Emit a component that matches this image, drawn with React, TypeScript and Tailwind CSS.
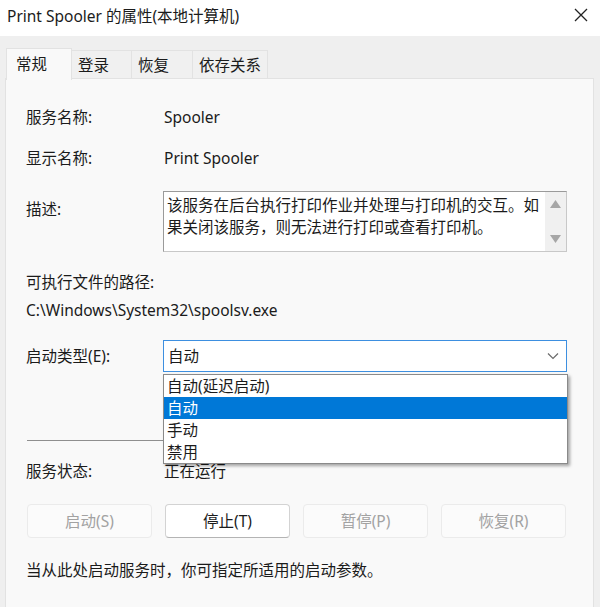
import React from "react";

const font = {
  fontFamily: '"Segoe UI", "Noto Sans", "Noto Sans CJK SC", sans-serif',
};

const tabs = [
  { label: "常规", w: "w-[66px]", active: true },
  { label: "登录", w: "w-[60px]" },
  { label: "恢复", w: "w-[61px]" },
  { label: "依存关系", w: "w-[75px]" },
];

const buttons = [
  { label: "启动(S)", enabled: false },
  { label: "停止(T)", enabled: true },
  { label: "暂停(P)", enabled: false },
  { label: "恢复(R)", enabled: false },
];

const options = ["自动(延迟启动)", "自动", "手动", "禁用"];

export default function App() {
  return (
    <div
      className="w-[600px] h-[607px] bg-[#efefef] overflow-hidden relative text-[15.5px] text-[#1b1b1b]"
      style={font}
    >
      {/* Title bar */}
      <div className="h-[36px] bg-white flex items-center justify-between pl-[7px] pr-[12px]">
        <span className="text-[15.5px] leading-[20px] -mt-[4px]">Print Spooler 的属性(本地计算机)</span>
        <svg width="14" height="14" viewBox="0 0 14 14" className="-mt-[6px]">
          <path d="M1 1 L13 13 M13 1 L1 13" stroke="#222" strokeWidth="1.3" />
        </svg>
      </div>

      {/* Tabs */}
      <div className="flex items-end pl-[6px] h-[44px] relative z-10">
        {tabs.map((t, i) =>
          t.active ? (
            <div
              key={t.label}
              className={`${t.w} h-[32px] bg-[#f9f9f9] border border-b-0 border-[#e2e2e2] pl-[9px] pt-[5px] leading-[20px]`}
            >
              {t.label}
            </div>
          ) : (
            <div
              key={t.label}
              className={`${t.w} h-[28px] mb-[2px] bg-[#f0f0f0] border border-b-0 border-[#e2e2e2] pl-[6px] pt-[4px] leading-[20px] ${i === 1 ? "border-l-0" : "border-l-0"}`}
            >
              {t.label}
            </div>
          )
        )}
      </div>

      {/* Panel */}
      <div className="absolute left-[5px] top-[78px] w-[589px] h-[540px] bg-[#f9f9f9] border border-[#e2e2e2]">
        <div className="pl-[20px] pr-[26px] pt-[28px] flex flex-col">
          <div className="flex h-[20px] items-center leading-[20px]">
            <span className="w-[138px]">服务名称:</span>
            <span>Spooler</span>
          </div>
          <div className="flex h-[20px] items-center leading-[20px] mt-[21px]">
            <span className="w-[138px]">显示名称:</span>
            <span>Print Spooler</span>
          </div>
          <div className="flex mt-[23px]">
            <span className="w-[137px] pt-[8px] leading-[20px]">描述:</span>
            <div className="flex-1 h-[61px] bg-white border border-[#c8c8c8] border-t-[#9a9a9a] border-l-[#9a9a9a] flex">
              <p className="flex-1 pl-[3px] pt-[2px] leading-[22px]">
                该服务在后台执行打印作业并处理与打印机的交互。如果关闭该服务，则无法进行打印或查看打印机。
              </p>
              <div className="w-[21px] bg-[#f0f0f0] flex flex-col items-center justify-between py-[8px]">
                <svg width="11" height="8" viewBox="0 0 11 8">
                  <path d="M5.5 0 L11 8 L0 8 Z" fill="#a6a6a6" />
                </svg>
                <svg width="11" height="8" viewBox="0 0 11 8">
                  <path d="M0 0 L11 0 L5.5 8 Z" fill="#a6a6a6" />
                </svg>
              </div>
            </div>
          </div>
          <div className="leading-[20px] mt-[20px]">可执行文件的路径:</div>
          <div className="leading-[20px] mt-[8px]">C:\Windows\System32\spoolsv.exe</div>
          <div className="flex items-center mt-[20px]">
            <span className="w-[137px] leading-[20px]">启动类型(E):</span>
            <div className="flex-1 h-[32px] bg-white border border-[#3d8fe0] flex items-center justify-between pl-[4px] pr-[7px] leading-[20px]">
              <span>自动</span>
              <svg width="12" height="8" viewBox="0 0 12 8">
                <path d="M1 1.5 L6 6.5 L11 1.5" fill="none" stroke="#6b6b6b" strokeWidth="1.2" />
              </svg>
            </div>
          </div>
          <div className="h-px bg-[#8f8f8f] mt-[68px] ml-[1px]" />
          <div className="flex h-[20px] items-center leading-[20px] mt-[20px]">
            <span className="w-[138px]">服务状态:</span>
            <span>正在运行</span>
          </div>
          <div className="grid grid-cols-4 gap-x-[13px] mt-[23px] ml-[1px] mr-[1px]">
            {buttons.map((b) => (
              <div
                key={b.label}
                className={
                  b.enabled
                    ? "h-[34px] flex items-center justify-center rounded-[4px] bg-white border border-[#d3d3d3] border-b-[#b4b4b4] leading-[20px]"
                    : "h-[34px] flex items-center justify-center rounded-[4px] bg-[#fbfbfb] border border-[#ebebeb] text-[#a2a2a2] leading-[20px]"
                }
              >
                {b.label}
              </div>
            ))}
          </div>
          <div className="leading-[20px] mt-[22px]">当从此处启动服务时，你可指定所适用的启动参数。</div>
        </div>
      </div>

      {/* Open dropdown list */}
      <div className="absolute left-[163px] top-[374px] w-[405px] bg-white border border-[#8a8a8a] shadow-[2px_2px_3px_rgba(0,0,0,0.35)] leading-[20px] z-20">
        {options.map((o, i) => (
          <div
            key={o}
            className={
              i === 1
                ? "h-[22px] pl-[3px] flex items-center bg-[#0078d7] text-white"
                : "h-[22px] pl-[3px] flex items-center"
            }
          >
            {o}
          </div>
        ))}
      </div>
    </div>
  );
}
